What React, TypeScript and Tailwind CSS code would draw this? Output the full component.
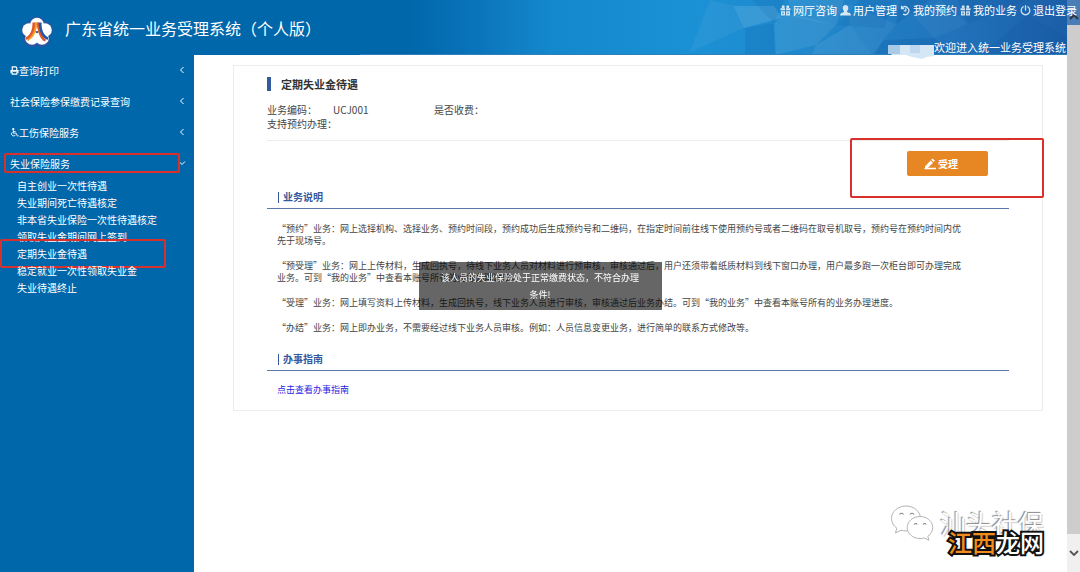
import React, { useState } from 'react';

const MENU = [
  { id: 'print', label: '查询打印', icon: 'print' },
  { id: 'records', label: '社会保险参保缴费记录查询' },
  { id: 'injury', label: '工伤保险服务', icon: 'wheelchair' },
  { id: 'unemployment', label: '失业保险服务', marked: true },
];

const SUB_MENU = [
  '自主创业一次性待遇',
  '失业期间死亡待遇核定',
  '非本省失业保险一次性待遇核定',
  '领取失业金期间网上签到',
  '定期失业金待遇',
  '稳定就业一次性领取失业金',
  '失业待遇终止',
];

const NAV = [
  { label: '网厅咨询', icon: 'grid' },
  { label: '用户管理', icon: 'user' },
  { label: '我的预约', icon: 'history' },
  { label: '我的业务', icon: 'grid' },
  { label: '退出登录', icon: 'power' },
];

const PARAGRAPHS = [
  [
    '“预约”业务：网上选择机构、选择业务、预约时间段，预约成功后生成预约号和二维码，在指定时间前往线下使用预约号或者二维码在取号机取号，预约号在预约时间内优',
    '先于现场号。',
  ],
  [
    '“预受理”业务：网上上传材料，生成回执号，待线下业务人员对材料进行预审核，审核通过后，用户还须带着纸质材料到线下窗口办理，用户最多跑一次柜台即可办理完成',
    '业务。可到“我的业务”中查看本账号所有的业务办理进度。',
  ],
  ['“受理”业务：网上填写资料上传材料，生成回执号，线下业务人员进行审核，审核通过后业务办结。可到“我的业务”中查看本账号所有的业务办理进度。'],
  ['“办结”业务：网上即办业务，不需要经过线下业务人员审核。例如：人员信息变更业务，进行简单的联系方式修改等。'],
];

function NavIcon({ name }: { name: string }) {
  return (
    <svg viewBox="0 0 11 11" className="h-[11px] w-[11px] shrink-0 opacity-80" fill="none" stroke="currentColor">
      {name === 'grid' && (
        <g fill="currentColor" stroke="none">
          <circle cx="3.2" cy="1.8" r="1.5" />
          <circle cx="7.8" cy="1.8" r="1.5" />
          <path d="M.5 3.3h4.500v2H.5zM6 3.300h4.500v2H6z" />
          <path d="M1 6.300h4v4.200H1zM6 6.300h4v4.200H6zM2.400 7.400v1.800h1.200V7.400zM7.400 7.400v1.800h1.200V7.400z" fillRule="evenodd" />
        </g>
      )}
      {name === 'user' && (
        <path
          d="M5.5 0C7.400 0 8.300 1.400 8.300 3c0 1.500-.6 2.500-1.300 3.200 0 .8.6 1.100 2 1.600 1.300.4 1.900 1.100 1.900 2.700H.1c0-1.600.6-2.300 1.900-2.700 1.400-.5 2-.8 2-1.600C3.300 5.500 2.700 4.500 2.700 3c0-1.600.9-3 2.800-3z"
          fill="currentColor"
          stroke="none"
        />
      )}
      {name === 'history' && (
        <g strokeWidth="1.3">
          <path d="M2 2.800A4 4 0 1 1 3 9.200" />
          <path d="M1.500.8v2.700h2.700M5.800 3.200v2.600H3.800" />
        </g>
      )}
      {name === 'power' && (
        <g strokeWidth="1.3" strokeLinecap="round">
          <path d="M3.200 1.800a4.300 4.300 0 1 0 4.600 0M5.500.7v4.300" />
        </g>
      )}
    </svg>
  );
}

function MenuIcon({ name }: { name: string }) {
  return (
    <svg viewBox="0 0 10 10" className="h-[9px] w-[9px] shrink-0" fill="none" stroke="currentColor" strokeWidth="1.3">
      {name === 'print' ? (
        <>
          <path d="M2.5 4.5V1h4l1 1v2.500M2.500 7v2h5V7" />
          <path d="M.5 4.5h9V8H8V6.500H2V8H.5z" fill="currentColor" stroke="none" />
        </>
      ) : (
        <>
          <circle cx="3.6" cy="1.3" r=".6" fill="currentColor" />
          <path d="M3.7 2.5v3.200h3.200L8.200 9l1.300-.4M3.700 4h2.600M2.500 4.800a2.300 2.300 0 1 0 3.600 2.700" strokeWidth="1" />
        </>
      )}
    </svg>
  );
}

function Logo() {
  return (
    <svg viewBox="0 0 32 32" className="h-8 w-8 shrink-0">
      <g fill="#2a55a0">
        <circle cx="16" cy="9.5" r="9" />
        <circle cx="8.5" cy="14" r="8.3" />
        <circle cx="23.5" cy="14" r="8.3" />
        <circle cx="11" cy="23" r="8.3" />
        <circle cx="21" cy="23" r="8.3" />
      </g>
      <g fill="#fff">
        <circle cx="16" cy="8.5" r="6.8" />
        <circle cx="8" cy="14" r="6.8" />
        <circle cx="24" cy="14" r="6.8" />
        <circle cx="11" cy="22" r="6.8" />
        <circle cx="21" cy="22" r="6.8" />
      </g>
      <path d="M11.5 6.5h4.200c.3 8-2.600 14-10.200 17.500l-1-2.500c5-2.500 7-7.500 7-15z" fill="#e0562b" />
      <path d="M14 6.5h1.800c.2 9-2.800 15-8.800 18.500l-1-1C11 20 14 15 14 6.500z" fill="#f4a023" />
      <path d="M16.3 6.5h4.200c0 7.500 2 12.500 7 15l-1 2.500C19 20.500 16 14.500 16.300 6.500z" fill="#2058a8" />
      <path d="M16.3 6.5h1.500c0 8.500 3 13.500 7.500 17.500l-2 1.500c-4.500-3-7.200-10-7-19z" fill="#e0562b" />
    </svg>
  );
}

function HeaderBackground() {
  return (
    <svg viewBox="0 0 1080 55" preserveAspectRatio="none" className="absolute inset-0 h-full w-full">
      <defs>
        <linearGradient id="sky" x1="0" x2="1" y1="0" y2="0">
          <stop offset="0.38" stopColor="#0067ab" />
          <stop offset="0.43" stopColor="#0971b7" />
          <stop offset="0.51" stopColor="#1488cd" />
          <stop offset="0.64" stopColor="#1b91d5" />
          <stop offset="0.76" stopColor="#2187cb" />
          <stop offset="0.88" stopColor="#2173bb" />
          <stop offset="1" stopColor="#1b5ca6" />
        </linearGradient>
      </defs>
      <path d="M0 0h1080v55H0z" fill="url(#sky)" />
      <g fill="#fff">
        <path d="M710 0l25 6 9 22-54 24z" opacity=".05" />
        <path d="M734 6h40l8 12-38 10z" opacity=".12" />
        <path d="M774 23l14-10 48 12-20 20-41 10z" opacity=".08" />
        <path d="M788 0h56l-8 25-42-8z" opacity=".07" />
        <path d="M816 45l34-20 22 30h-60z" opacity=".08" />
        <path d="M848 4l48 20-24 31-22-30z" opacity=".05" />
        <path d="M940 0l28 24-34 14-20-22z" opacity=".04" />
      </g>
      <g fill="#0b4f9c">
        <path d="M745 28l29-5 2 32h-31z" opacity=".14" />
        <path d="M774 23l-22-23h32z" opacity=".1" />
        <path d="M836 25l24-25h34l-10 28z" opacity=".12" />
        <path d="M896 24l34-24h-30zM884 40l50-2 20 17h-80z" opacity=".2" />
        <path d="M968 24l60-24h-70zM980 55l48-40 52 30v10z" opacity=".15" />
      </g>
      <path d="M360 54h720v1H360z" fill="#2c7fb8" />
    </svg>
  );
}

function Header() {
  return (
    <header className="relative flex h-[55px] items-stretch justify-between text-white">
      <HeaderBackground />
      <div className="relative flex items-start gap-3 pt-4 pl-[21px]">
        <Logo />
        <h1 className="text-base leading-6">广东省统一业务受理系统（个人版）</h1>
      </div>
      <div className="relative z-20 flex flex-col items-end justify-between pt-[2px] text-[11px] leading-4">
        <nav className="flex gap-[3px] pr-[3px]">
          {NAV.map((item) => (
            <a key={item.label} href="#" className="flex items-center gap-[2px] whitespace-nowrap">
              <NavIcon name={item.icon} />
              {item.label}
            </a>
          ))}
        </nav>
        <div className="flex items-end pr-[14px]">
          <svg viewBox="0 0 46 16" className="-mb-1 h-4 w-[46px]">
            <path d="M0 2h46v11l-8 1-4 2-10-2-6-2H4L0 8z" fill="#d5e6f5" />
            <path d="M0 2h12v9H0z" fill="#a9cbe8" />
            <path d="M22 2h10v8H22z" fill="#bdd7ee" />
          </svg>
          <p>欢迎进入统一业务受理系统</p>
        </div>
      </div>
    </header>
  );
}

function Sidebar() {
  const [open, setOpen] = useState('unemployment');

  return (
    <aside className="w-[194px] shrink-0 bg-[#0067ab] pt-px text-[10px] text-white">
      <ul className="flex flex-col gap-[3px]">
        {MENU.map((item) => (
          <li key={item.id} className="relative">
            <button
              type="button"
              onClick={() => setOpen(open === item.id ? '' : item.id)}
              className="flex h-7 w-full items-center justify-between pr-2 pl-[10px]"
            >
              <span className="flex items-center">
                {item.icon && <MenuIcon name={item.icon} />}
                {item.label}
              </span>
              <svg viewBox="0 0 8 8" className="h-2 w-2" fill="none" stroke="currentColor">
                <path d={open === item.id ? 'M1 2.5l3 3 3-3' : 'M5.5 1l-3 3 3 3'} />
              </svg>
            </button>
            {item.marked && (
              <span className="pointer-events-none absolute inset-y-[4px] right-[14px] left-1 rounded-xs border-2 border-[#d8302c]" />
            )}
          </li>
        ))}
      </ul>
      {open === 'unemployment' && (
        <ul className="leading-[17px]">
          {SUB_MENU.map((label) => (
            <li key={label} className="relative pl-[17px]">
              <a href="#">{label}</a>
              {label === '定期失业金待遇' && (
                <span className="pointer-events-none absolute -inset-y-[6px] right-7 left-0 rounded-xs border-2 border-[#d8302c]" />
              )}
            </li>
          ))}
        </ul>
      )}
    </aside>
  );
}

function SectionTitle({ children }: { children: React.ReactNode }) {
  return (
    <div className="flex items-center border-b border-[#5878a6] pb-[3px] pl-[11px]">
      <span className="h-[11px] w-px bg-[#34599c]" />
      <h3 className="pl-1 text-[10px] leading-4 font-bold text-[#34599c]">{children}</h3>
    </div>
  );
}

function ServiceCard() {
  return (
    <section className="border border-[#ececec] px-[33px] pt-[11px] pb-[14px] text-[9px] leading-3 text-[#444]">
      <h2 className="flex items-center gap-[10px] text-[11px] leading-[14px] font-bold text-[#333]">
        <span className="h-[14px] w-1 bg-[#34599c]" />
        定期失业金待遇
      </h2>
      <dl className="mt-3 grid grid-cols-[66px_101px_1fr] border-b border-[#ececec] pb-[9px] text-[10px] leading-[14px]">
        <dt>业务编码：</dt>
        <dd>UCJ001</dd>
        <dt>是否收费：</dt>
        <dt className="col-span-3">支持预约办理：</dt>
      </dl>
      <div className="relative mt-[10px] flex justify-end pr-[21px]">
        <button
          type="button"
          className="flex h-[25px] w-[81px] items-center gap-[2px] rounded-xs bg-[#e78723] pl-[17px] text-[10px] font-bold text-white"
        >
          <svg viewBox="0 0 12 12" className="h-3 w-3" fill="currentColor">
            <path d="M1 8.500L6.500 2.500l2.500 2.300L4 10H1zM7.200 1.800L8.500.5 11 2.800 9.700 4.100zM5 9.800h7V11.300H.5V10H5z" />
          </svg>
          受理
        </button>
        <span className="pointer-events-none absolute -top-[13px] -right-[35px] h-[60px] w-[194px] rounded-xs border-2 border-[#d8302c]" />
      </div>
      <div className="mt-[13px]">
        <SectionTitle>业务说明</SectionTitle>
      </div>
      <div className="mt-[14px] flex flex-col gap-[13px] pl-[10px]">
        {PARAGRAPHS.map((lines) => (
          <p key={lines[0]}>
            {lines.map((line) => (
              <span key={line} className="block">{line}</span>
            ))}
          </p>
        ))}
      </div>
      <div className="mt-[17px]">
        <SectionTitle>办事指南</SectionTitle>
      </div>
      <p className="mt-[13px] pl-[10px]">
        <a href="#" className="text-[#2a1fe0]">点击查看办事指南</a>
      </p>
    </section>
  );
}

function Scrollbar() {
  return (
    <div className="absolute inset-y-0 right-0 z-10 flex w-[13px] flex-col">
      <div className="flex h-[25px] items-center justify-center bg-[#8fb0d0]/40 pt-2">
        <svg viewBox="0 0 10 6" className="h-[6px] w-[10px]" fill="none" stroke="#333" strokeWidth="1.8">
          <path d="M1 5l4-4 4 4" />
        </svg>
      </div>
      <div className="flex-1 bg-[#cdcdcd]" />
      <div className="flex h-[38px] items-center justify-center bg-[#f0f0f0]">
        <svg viewBox="0 0 10 6" className="h-[6px] w-[10px]" fill="none" stroke="#555" strokeWidth="1.8">
          <path d="M1 1l4 4 4-4" />
        </svg>
      </div>
    </div>
  );
}

function Watermark() {
  return (
    <div className="absolute right-9 bottom-4 flex flex-col items-end">
      <div className="flex items-center gap-[6px]">
        <svg viewBox="0 0 44 38" className="h-[38px] w-11" fill="#fff" stroke="#b4b4b4">
          <path d="M16 2C8 2 1.500 7.500 1.500 14.500c0 4 2 7.300 5.300 9.600L5.500 29l5.500-2.800c1.600.5 3.300.7 5 .7 8 0 14.500-5.500 14.500-12.400S24 2 16 2z" />
          <path d="M30 12.500c-7 0-12.800 4.900-12.800 11S23 34.500 30 34.500c1.500 0 3-.2 4.300-.6l4.700 2.400-1.200-4c3-2 4.900-5.200 4.900-8.800 0-6.100-5.700-11-12.700-11z" />
          <path d="M9.500 10.500q2-2.500 4 0M20 10.500q2-2.500 4 0M24 20.500q1.600-2 3.200 0M33 20.500q1.600-2 3.200 0" fill="none" stroke="#888" strokeWidth="1.2" />
        </svg>
        <span className="text-[26px] leading-9 text-white [text-shadow:-1px_-1px_1px_#888,1px_1px_1px_#ccc]">汕头社保</span>
      </div>
      <strong className="-mt-[14px] text-2xl leading-7 font-medium text-white [paint-order:stroke_fill] [-webkit-text-stroke:4px_#111]">
        <span className="text-[#f08c1c]">江西</span>龙网
      </strong>
    </div>
  );
}

function Toast() {
  return (
    <div className="pointer-events-none fixed inset-0 z-30 flex items-center justify-center">
      <div role="alert" className="w-[243px] bg-black/60 px-5 py-[7px] text-center text-[9px] leading-[17px] text-white">
        该人员的失业保险处于正常缴费状态，不符合办理条件!
      </div>
    </div>
  );
}

export default function App() {
  return (
    <div lang="zh-CN" className="relative flex min-h-screen flex-col bg-white font-['Noto_Sans_CJK_SC',sans-serif]">
      <Header />
      <div className="flex flex-1">
        <Sidebar />
        <main className="min-w-0 flex-1 pt-[10px] pr-[37px] pl-[39px]">
          <ServiceCard />
        </main>
      </div>
      <Watermark />
      <Scrollbar />
      <Toast />
    </div>
  );
}
